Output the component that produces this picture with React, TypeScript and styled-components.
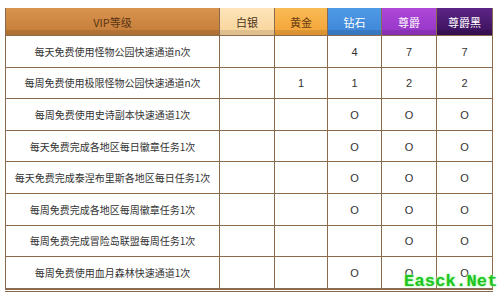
import styled, { createGlobalStyle } from 'styled-components'

const GlobalStyle = createGlobalStyle`
  body {
    margin: 0;
    background: #ffffff;
    font-family: "Noto Sans CJK SC", "Noto Sans", sans-serif;
  }
`

const Page = styled.div`
  position: relative;
  width: 500px;
  height: 299px;
  padding: 8px 0 0 5px;
  box-sizing: border-box;
  overflow: hidden;
`

const Frame = styled.div`
  width: 488px;
  border-bottom: 3px double #8b6a4e;
`

const Table = styled.table`
  width: 100%;
  border-collapse: collapse;
  table-layout: fixed;
`

const HeadCell = styled.th<{ $bg: string; $fg: string; $w?: number }>`
  height: 27px;
  padding: 0;
  width: ${(p) => (p.$w ? p.$w + 'px' : 'auto')};
  background: ${(p) => p.$bg};
  color: ${(p) => p.$fg};
  font-weight: normal;
  font-size: 11px;
  border: 1px solid #8b6a4e;
  border-top: none;
  box-shadow: inset 0 -5px 0 rgba(0, 0, 0, 0.1);
`

const Row = styled.tr`
  height: 31.6px;
`

const Cell = styled.td`
  padding: 0;
  text-align: center;
  font-size: 10px;
  color: #333333;
  border: 1px solid #8b6a4e;
  background: #ffffff;
`

const Mark = styled.span`
  font-family: "Liberation Sans", Arial, sans-serif;
  font-size: 11px;
  color: #333333;
`

const Watermark = styled.div`
  position: absolute;
  left: 404px;
  top: 272px;
  font-family: "Liberation Mono", monospace;
  font-weight: bold;
  font-size: 17px;
  color: #1fc41f;
  text-shadow: 0 0 2px #9cf59c, 0 0 3px #c8ffc8;
  letter-spacing: 0.2px;
`

const heads = [
  { label: 'VIP等级', bg: 'linear-gradient(#d8944f, #c47b38)', fg: '#5a3414', w: 213 },
  { label: '白银', bg: 'linear-gradient(#fde4b8, #f8d39a)', fg: '#4a3420', w: 54 },
  { label: '黄金', bg: 'linear-gradient(#f9bb55, #f2a235)', fg: '#6a3c10', w: 52 },
  { label: '钻石', bg: 'linear-gradient(#4f9ae6, #3d84d6)', fg: '#ffffff', w: 53 },
  { label: '尊爵', bg: 'linear-gradient(#ad48d8, #9434c6)', fg: '#ffffff', w: 54 },
  { label: '尊爵黑', bg: 'linear-gradient(#5b2586, #3a1058)', fg: '#ffffff' },
]

const rows: [string, string, string, string, string, string][] = [
  ['每天免费使用怪物公园快速通道n次', '', '', '4', '7', '7'],
  ['每周免费使用极限怪物公园快速通道n次', '', '1', '1', '2', '2'],
  ['每周免费使用史诗副本快速通道1次', '', '', 'O', 'O', 'O'],
  ['每天免费完成各地区每日徽章任务1次', '', '', 'O', 'O', 'O'],
  ['每天免费完成泰涅布里斯各地区每日任务1次', '', '', 'O', 'O', 'O'],
  ['每周免费完成各地区每周徽章任务1次', '', '', 'O', 'O', 'O'],
  ['每周免费完成冒险岛联盟每周任务1次', '', '', '', 'O', 'O'],
  ['每周免费使用血月森林快速通道1次', '', '', 'O', 'O', 'O'],
]

export default function App() {
  return (
    <>
      <GlobalStyle />
      <Page>
        <Frame>
          <Table>
            <thead>
              <tr>
                {heads.map((h) => (
                  <HeadCell key={h.label} $bg={h.bg} $fg={h.fg} $w={h.w}>
                    {h.label}
                  </HeadCell>
                ))}
              </tr>
            </thead>
            <tbody>
              {rows.map((r) => (
                <Row key={r[0]}>
                  <Cell>{r[0]}</Cell>
                  {r.slice(1).map((v, i) => (
                    <Cell key={i}>{v && <Mark>{v}</Mark>}</Cell>
                  ))}
                </Row>
              ))}
            </tbody>
          </Table>
        </Frame>
        <Watermark>Easck.Net</Watermark>
      </Page>
    </>
  )
}
